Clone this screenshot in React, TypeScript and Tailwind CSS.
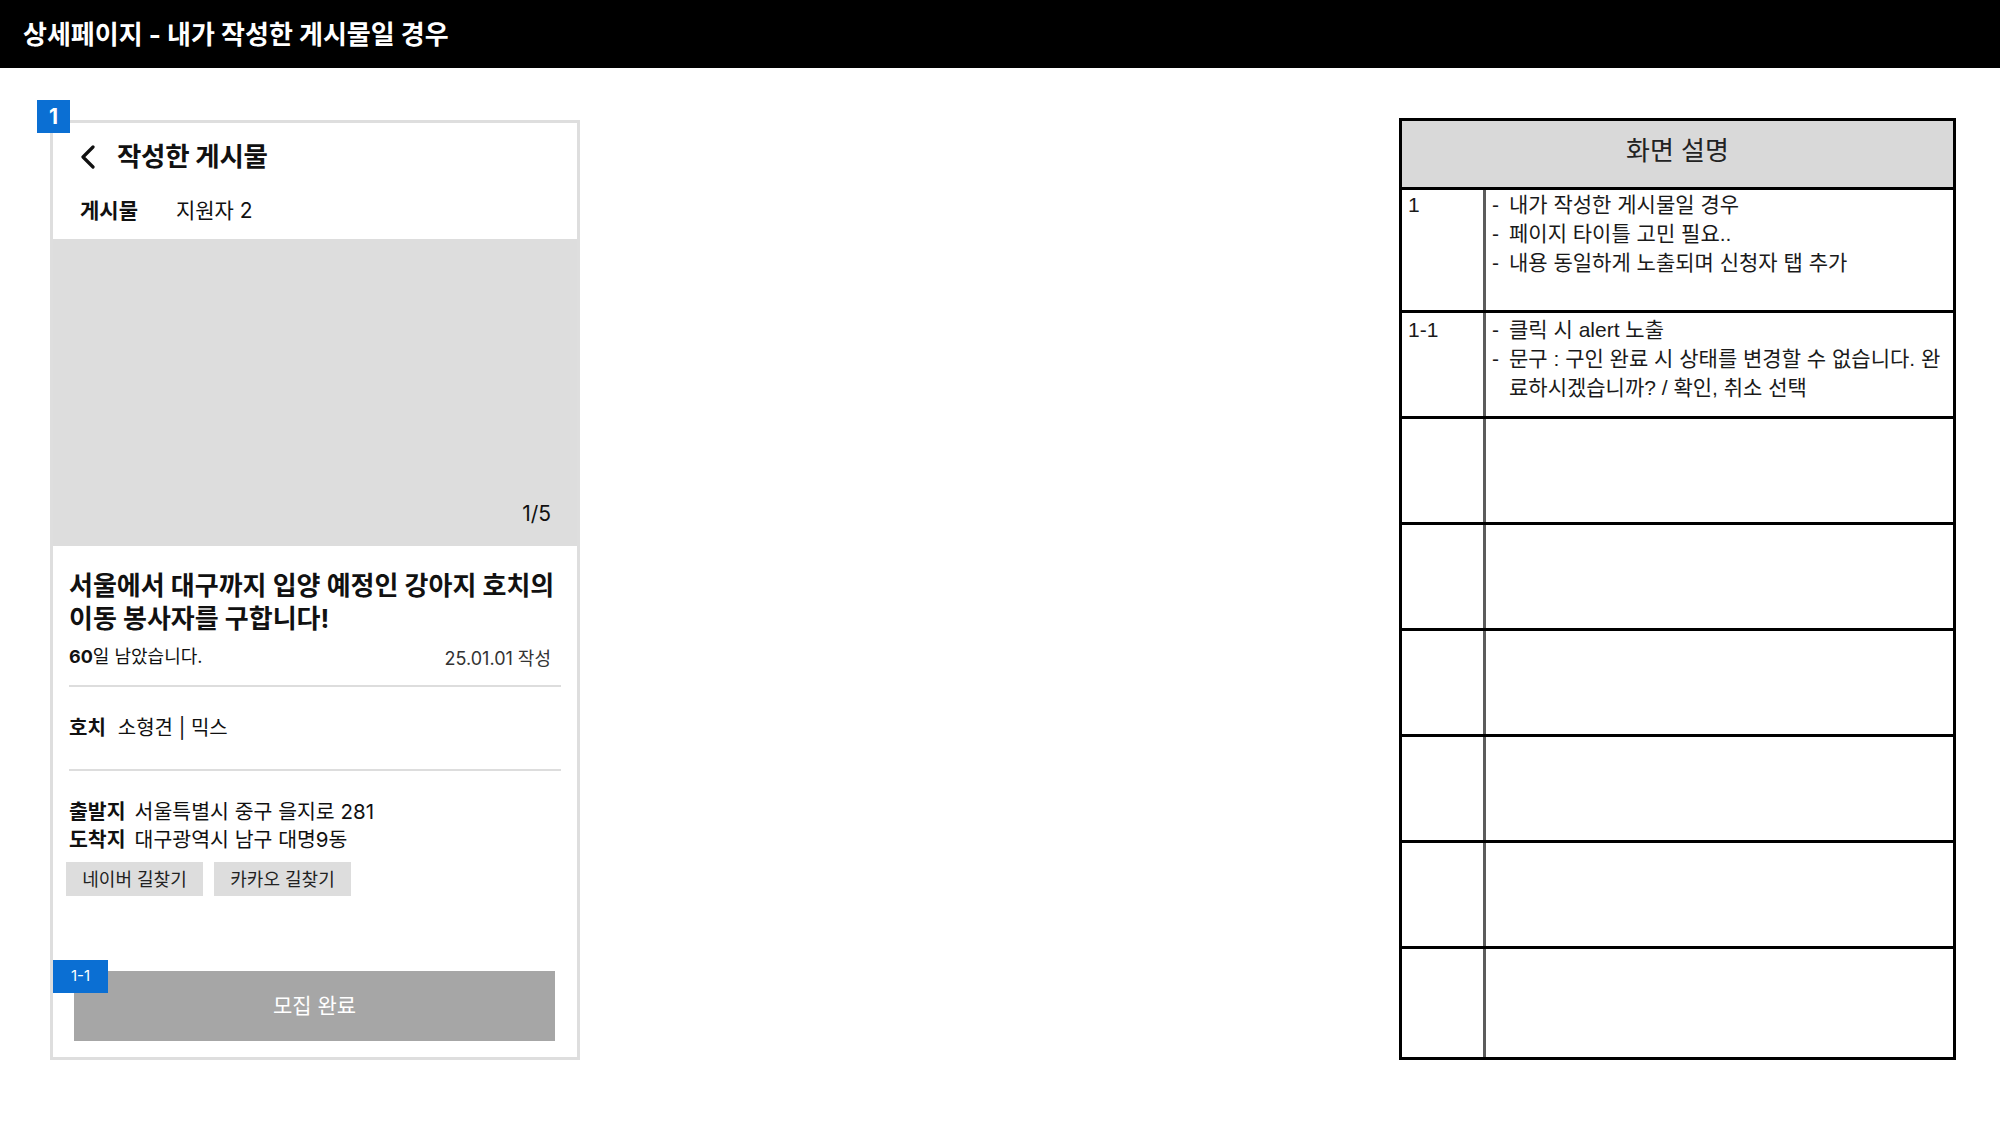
import React from "react";

const PHONE_FONT = "font-['Inter','Noto_Sans_CJK_KR',sans-serif]";
const DOC_FONT = "font-['Liberation_Sans','Noto_Sans_CJK_KR',sans-serif]";

type Row = { label: string; lines: string[] };

const ROWS: Row[] = [
  {
    label: "1",
    lines: ["내가 작성한 게시물일 경우", "페이지 타이틀 고민 필요..", "내용 동일하게 노출되며 신청자 탭 추가"],
  },
  {
    label: "1-1",
    lines: ["클릭 시 alert 노출", "문구 : 구인 완료 시 상태를 변경할 수 없습니다. 완\n료하시겠습니까? / 확인, 취소 선택"],
  },
  { label: "", lines: [] },
  { label: "", lines: [] },
  { label: "", lines: [] },
  { label: "", lines: [] },
  { label: "", lines: [] },
  { label: "", lines: [] },
];

const ChevronLeft = () => (
  <svg width="16" height="24" viewBox="0 0 16 24" fill="none">
    <path d="M13 2 L3 12 L13 22" stroke="#111" strokeWidth="3.2" strokeLinecap="round" strokeLinejoin="round" />
  </svg>
);

const PhoneScreen: React.FC = () => (
  <div className={`relative w-[530px] h-[940px] border-[3px] border-[#dedede] flex flex-col bg-white text-[#111] ${PHONE_FONT}`}>
    <div className="absolute -left-[16px] -top-[23px] w-[33px] h-[33px] bg-[#0b6fd3] text-white text-[21px] font-bold flex items-center justify-center">
      1
    </div>

    <header className="h-[116px] px-[27px] pb-[8px] flex flex-col">
      <div className="h-[68px] flex items-center gap-[21px]">
        <ChevronLeft />
        <h1 className="text-[26.5px] font-bold tracking-[-0.01em]">작성한 게시물</h1>
      </div>
      <nav className="h-[40px] flex items-center gap-[38px] text-[21px]">
        <span className="font-bold">게시물</span>
        <span>지원자 2</span>
      </nav>
    </header>

    <div className="h-[307px] bg-[#dddddd] flex items-end justify-end pr-[26px] pb-[19px]">
      <span className="text-[21px] leading-[26px]">1/5</span>
    </div>

    <section className="px-4 flex flex-col">
      <h2 className="pt-[23px] text-[26px] leading-[33px] font-bold whitespace-nowrap">
        서울에서 대구까지 입양 예정인 강아지 호치의
        <br />
        이동 봉사자를 구합니다!
      </h2>
      <div className="mt-[9px] h-[24px] flex items-center justify-between">
        <span className="text-[18px]">
          <b>60</b>일 남았습니다.
        </span>
        <span className="mr-[10px] mt-[5px] text-[18px] text-[#333]">25.01.01 작성</span>
      </div>
      <div className="mt-[17px] h-[2px] bg-[#dddddd]" />
      <div className="mt-[27px] leading-[28px] text-[20px] flex gap-[12px]">
        <span className="font-bold">호치</span>
        <span>소형견 | 믹스</span>
      </div>
      <div className="mt-[27px] h-[2px] bg-[#dddddd]" />
      <div className="mt-[27px] text-[20.5px] leading-[28px]">
        <p>
          <b className="mr-[9px]">출발지</b>서울특별시 중구 을지로 281
        </p>
        <p>
          <b className="mr-[9px]">도착지</b>대구광역시 남구 대명9동
        </p>
      </div>
      <div className="mt-[8px] -ml-[3px] flex gap-[11px]">
        <button type="button" className="w-[137px] h-[34px] bg-[#dddddd] text-[18px] text-[#222]">
          네이버 길찾기
        </button>
        <button type="button" className="w-[137px] h-[34px] bg-[#dddddd] text-[18px] text-[#222]">
          카카오 길찾기
        </button>
      </div>
    </section>

    <button
      type="button"
      className="relative mt-auto mb-[16px] ml-[21px] mr-[22px] h-[70px] bg-[#a6a6a6] text-white text-[21px]"
    >
      <span className="absolute -left-[21px] -top-[11px] w-[55px] h-[33px] bg-[#0b6fd3] text-white text-[15px] flex items-center justify-center">
        1-1
      </span>
      모집 완료
    </button>
  </div>
);

const DescriptionTable: React.FC = () => (
  <div className={`w-[557px] h-[942px] border-[3px] border-black flex flex-col text-[#1a1a1a] ${DOC_FONT}`}>
    <div className="h-[69px] shrink-0 border-b-[3px] border-black bg-[#d9d9d9] flex items-center justify-center pb-[6px] text-[26px] text-[#222]">
      화면 설명
    </div>
    {ROWS.map((row, i) => {
      const pad = i === 0 ? "pt-0" : "pt-[2px]";
      return (
        <div
          key={i}
          className={`flex text-[21px] leading-[29px] ${
            i === 0
              ? "h-[123px] shrink-0 border-b-[3px] border-black"
              : i === ROWS.length - 1
                ? "flex-1"
                : "h-[106px] shrink-0 border-b-[3px] border-black"
          }`}
        >
          <div className={`w-[84px] shrink-0 border-r-[3px] border-[#5c5c5c] pl-[6px] ${pad}`}>{row.label}</div>
          <ul className={`flex-1 pl-[6px] ${pad}`}>
            {row.lines.map((line) => (
              <li key={line} className="flex">
                <span className="w-[17px] shrink-0">-</span>
                <span className="whitespace-pre">{line}</span>
              </li>
            ))}
          </ul>
        </div>
      );
    })}
  </div>
);

export default function App() {
  return (
    <div className="w-[2000px] h-[1125px] bg-white flex flex-col overflow-hidden">
      <div className={`h-[68px] shrink-0 bg-black flex items-center pl-[23px] ${PHONE_FONT}`}>
        <span className="text-white text-[26px] font-bold">상세페이지 - 내가 작성한 게시물일 경우</span>
      </div>
      <div className="flex items-start">
        <div className="ml-[50px] mt-[52px]">
          <PhoneScreen />
        </div>
        <div className="ml-auto mr-[44px] mt-[50px]">
          <DescriptionTable />
        </div>
      </div>
    </div>
  );
}
